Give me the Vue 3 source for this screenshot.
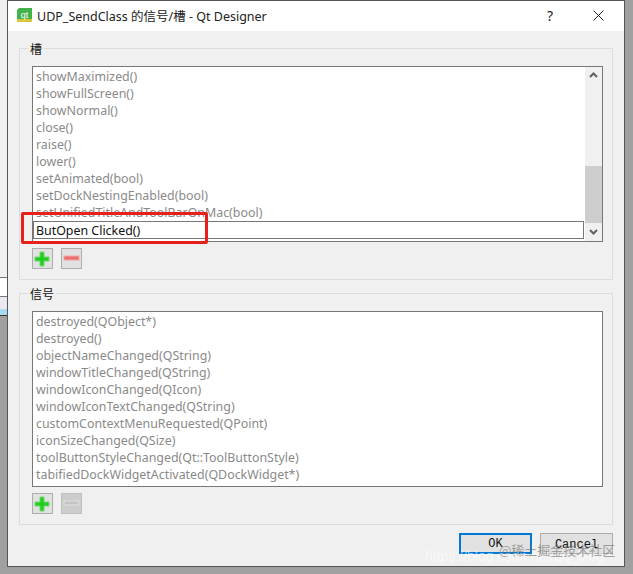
<script setup>
const slots = ['showMaximized()','showFullScreen()','showNormal()','close()','raise()','lower()','setAnimated(bool)','setDockNestingEnabled(bool)','setUnifiedTitleAndToolBarOnMac(bool)']
const signals = ['destroyed(QObject*)','destroyed()','objectNameChanged(QString)','windowTitleChanged(QString)','windowIconChanged(QIcon)','windowIconTextChanged(QString)','customContextMenuRequested(QPoint)','iconSizeChanged(QSize)','toolButtonStyleChanged(Qt::ToolButtonStyle)','tabifiedDockWidgetActivated(QDockWidget*)']
</script>

<template>
  <div class="desk">
    <div class="strip"><i class="s1"></i><i class="s2"></i><i class="s3"></i><i class="s4"></i></div>
    <div class="window">
      <header class="titlebar">
        <svg class="qt" width="15" height="15" viewBox="0 0 15 15">
          <path d="M2 0h13v11l-2 3H0V2z" fill="#41b34a"/>
          <rect x="0" y="11" width="15" height="3" fill="#d7c63c"/>
          <text x="7.5" y="9.5" text-anchor="middle" font-size="9" fill="#fff" font-family="Liberation Sans, sans-serif">qt</text>
        </svg>
        <span class="title">UDP_SendClass 的信号/槽 - Qt Designer</span>
        <span class="help">?</span>
        <svg class="close" width="11" height="11" viewBox="0 0 11 11"><path d="M.5.5l10 10M10.500.5l-10 10" stroke="#222" fill="none"/></svg>
      </header>
      <main class="content">
        <fieldset class="group">
          <legend>槽</legend>
          <div class="list slots">
            <div class="rows">
              <div v-for="s in slots" :key="s" class="row">{{ s }}</div>
              <input class="edit" value="ButOpen Clicked()" />
            </div>
            <div class="scroll">
              <svg width="9" height="6" viewBox="0 0 9 6"><path d="M1 5l3.500-3.500L8 5" stroke="#606060" stroke-width="2" fill="none"/></svg>
              <div class="track"><div class="thumb"></div></div>
              <svg width="9" height="6" viewBox="0 0 9 6"><path d="M1 1l3.500 3.500L8 1" stroke="#606060" stroke-width="2" fill="none"/></svg>
            </div>
          </div>
          <div class="tools">
            <button class="tool"><svg width="17" height="17" viewBox="0 0 17 17"><path d="M6 2h4v5h5v4h-5v5H6v-5H1V7h5z" fill="#22cc22" stroke="#6fd96f"/></svg></button>
            <button class="tool"><svg width="17" height="7" viewBox="0 0 17 7"><rect x="1" y="1" width="15" height="4" fill="#ee6f70" stroke="#f0a6a6"/></svg></button>
          </div>
        </fieldset>
        <fieldset class="group second">
          <legend>信号</legend>
          <div class="list signals">
            <div v-for="s in signals" :key="s" class="row">{{ s }}</div>
          </div>
          <div class="tools">
            <button class="tool"><svg width="17" height="17" viewBox="0 0 17 17"><path d="M6 2h4v5h5v4h-5v5H6v-5H1V7h5z" fill="#22cc22" stroke="#6fd96f"/></svg></button>
            <button class="tool off"><svg width="17" height="7" viewBox="0 0 17 7"><rect x="1" y="1" width="15" height="4" fill="#c4c4c4" stroke="#e0e0e0"/></svg></button>
          </div>
        </fieldset>
        <footer class="actions">
          <button class="btn default">OK</button>
          <button class="btn">Cancel</button>
        </footer>
      </main>
    </div>
    <div class="redbox"></div>
    <div class="wm1">https://blog.csdn.net/qq_blog</div>
    <div class="wm2">@稀土掘金技术社区</div>
  </div>
</template>

<style>
html, body { margin: 0; background: #a0a0a0; }
</style>

<style scoped>
.desk { position: relative; width: 633px; height: 574px; padding: 0 8px 0 7px; box-sizing: border-box; overflow: hidden; font-family: "Noto Sans", sans-serif; }
.strip { position: absolute; left: 0; top: 0; width: 7px; height: 316px; display: flex; flex-direction: column; }
.strip i { display: block; }
.s1 { height: 278px; background: #f0f0f0; border-bottom: 1px solid #777; }
.s2 { height: 18px; background: #fff; border-bottom: 1px solid #777; }
.s3 { height: 12px; background: #e9e9ef; }
.s4 { height: 6px; background: #a6dcf2; border-bottom: 1px solid #333; }
.window { position: relative; width: 618px; height: 567px; box-sizing: border-box; border: 1px solid #555; background: #f0f0f0; }
.titlebar { height: 30px; background: #fff; display: flex; align-items: center; padding: 0 20px 2px 9px; box-sizing: border-box; font: 12.5px "Noto Sans", "Noto Sans CJK SC", sans-serif; color: #222; }
.qt { margin-right: 5px; }
.title { flex: 1; }
.help { width: 46px; font-size: 14px; }
.content { padding: 9px 11px 0; }
.group { margin: 0; padding: 0 12px; border: 1px solid #dcdcdc; height: 240px; box-sizing: border-box; min-width: 0; }
.second { margin-top: 5px; }
legend { margin-left: -4px; padding: 0 2px; font: 12px "Noto Sans CJK SC", sans-serif; color: #111; line-height: 17px; }
.list { box-sizing: border-box; width: 571px; height: 176px; background: #fff; border: 1px solid #777; margin-top: 9px; }
.slots { display: flex; }
.signals { padding-top: 1px; }
.rows { flex: 1; padding-top: 1px; min-width: 0; }
.row { height: 17px; line-height: 17px; padding-left: 3px; font-size: 12.4px; color: #8a8a8a; white-space: nowrap; }
.edit { display: block; box-sizing: border-box; width: 551px; height: 18px; margin: 0; padding: 0 0 0 2px; border: 1px solid #777; outline: 0; font: 12.4px "Noto Sans", sans-serif; color: #111; background: #fff; }
.scroll { width: 17px; background: #f0f0f0; display: flex; flex-direction: column; align-items: center; padding-top: 5px; box-sizing: border-box; height: 174px; }
.track { flex: 1; width: 100%; margin-top: 6px; display: flex; flex-direction: column; justify-content: flex-end; }
.thumb { height: 57px; background: #cdcdcd; margin-bottom: 1px; }
.scroll svg:last-child { margin: 5px 0 6px; }
.tools { display: flex; gap: 8px; margin-top: 6px; }
.tool { width: 21px; height: 21px; padding: 0; border: 1px solid #adadad; background: #e1e1e1; display: flex; align-items: center; justify-content: center; }
.tool.off { background: #ccc; border-color: #bfbfbf; }
.actions { display: flex; justify-content: flex-end; gap: 8px; margin-top: 8px; }
.btn { width: 73px; height: 21px; box-sizing: border-box; padding: 2px 0 0; border: 1px solid #adadad; background: #e1e1e1; font: 12px "Liberation Mono", monospace; color: #111; }
.btn.default { border: 2px solid #0078d7; padding: 0; }
.redbox { position: absolute; left: 21px; top: 212px; width: 187px; height: 32px; box-sizing: border-box; border: 3px solid #e8201c; border-radius: 2px; }
.wm1 { position: absolute; left: 425px; top: 548px; font: 14px "Liberation Sans", sans-serif; color: rgba(255,255,255,.6); white-space: nowrap; }
.wm2 { position: absolute; left: 499px; top: 540px; font: 13px "Noto Sans CJK SC", sans-serif; color: rgba(110,110,110,.6); white-space: nowrap; }
</style>
